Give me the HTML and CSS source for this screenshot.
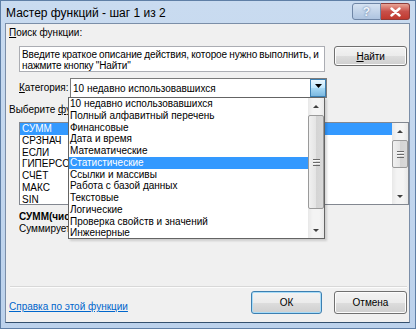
FILE: index.html
```html
<!DOCTYPE html>
<html lang="ru">
<head>
    <meta charset="UTF-8">
    <title>Мастер функций</title>
    <link rel="stylesheet" href="styles.css">
</head>
<body>
<div class="window">
    <div class="titlebar">
        <span class="title">Мастер функций - шаг 1 из 2</span>
        <div class="caption-btns">
            <span class="cbtn help">?</span>
            <span class="cbtn close">
                <svg width="11" height="10" viewBox="0 0 11 10"><path d="M1.5 1.5l8 7M9.5 1.5l-8 7" stroke="#fff" stroke-width="2.4" stroke-linecap="round"/></svg>
            </span>
        </div>
    </div>
    <div class="client">
        <div class="label top-label"><u>П</u>оиск функции:</div>
        <div class="search-row">
            <div class="textarea">Введите краткое описание действия, которое нужно выполнить, и<br>нажмите кнопку "Найти"</div>
            <div class="button find"><u>Н</u>айти</div>
        </div>
        <div class="cat-row">
            <span class="label"><u>К</u>атегория:</span>
            <div class="combo">
                <span class="combo-text">10 недавно использовавшихся</span>
                <span class="combo-arrow"><svg width="7" height="4" viewBox="0 0 7 4"><path d="M0 0h7L3.5 4z" fill="#000"/></svg></span>
            </div>
        </div>
        <div class="label list-label">Выберите <u>ф</u>ункцию:</div>
        <div class="listbox">
            <ul class="items">
                <li class="sel">СУММ</li>
                <li>СРЗНАЧ</li>
                <li>ЕСЛИ</li>
                <li>ГИПЕРССЫЛКА</li>
                <li>СЧЁТ</li>
                <li>МАКС</li>
                <li>SIN</li>
            </ul>
            <div class="vscroll">
                <span class="arr up"></span>
                <span class="thumb list-thumb"><i></i></span>
                <span class="track"></span>
                <span class="arr down"></span>
            </div>
        </div>
        <div class="signature">СУММ(число1;число2;...)</div>
        <div class="desc">Суммирует аргументы.</div>
        <div class="separator"></div>
        <div class="bottom-row">
            <a class="link" href="#">Справка по этой функции</a>
            <div class="button ok">ОК</div>
            <div class="button cancel">Отмена</div>
        </div>

        <div class="dropdown">
            <ul class="items drop-items">
                <li>10 недавно использовавшихся</li>
                <li>Полный алфавитный перечень</li>
                <li>Финансовые</li>
                <li>Дата и время</li>
                <li>Математические</li>
                <li class="sel">Статистические</li>
                <li>Ссылки и массивы</li>
                <li>Работа с базой данных</li>
                <li>Текстовые</li>
                <li>Логические</li>
                <li>Проверка свойств и значений</li>
                <li>Инженерные</li>
            </ul>
            <div class="vscroll">
                <span class="arr up"></span>
                <span class="thumb drop-thumb"><i></i></span>
                <span class="track"></span>
                <span class="arr down"></span>
            </div>
        </div>
    </div>
</div>
</body>
</html>
```
FILE: styles.css
```css
* {
    margin: 0;
    padding: 0;
    box-sizing: border-box;
}
body {
    width: 416px;
    height: 329px;
    overflow: hidden;
    font-family: "Liberation Sans", Arial, sans-serif;
    font-size: 10px;
    color: #000;
}
.window {
    width: 416px;
    height: 329px;
    background: linear-gradient(#c9dbf0, #bcd2ec);
    border: 1px solid #5f7fa6;
    padding: 0 5px 5px 4px;
    display: flex;
    flex-direction: column;
}
.titlebar {
    height: 22px;
    display: flex;
    align-items: center;
    justify-content: space-between;
}
.title {
    font-size: 12px;
    padding-left: 1px;
    padding-top: 1px;
}
.caption-btns {
    display: flex;
    align-self: flex-start;
    margin-top: 2px;
}
.cbtn {
    height: 17px;
    display: flex;
    align-items: center;
    justify-content: center;
    border: 1px solid #6f86a6;
}
.help {
    width: 29px;
    border-radius: 3px 0 0 3px;
    background: linear-gradient(#d6e3f2, #aec4e0);
    color: #eef4fb;
    font-weight: bold;
    font-size: 12px;
    text-shadow: 0 0 2px #4a6690;
}
.close {
    width: 29px;
    border-left: none;
    border-color: #8c3c3c;
    border-radius: 0 3px 3px 0;
    background: linear-gradient(#e9a596, #c8504a 50%, #c0392e);
}
.client {
    position: relative;
    flex: 1;
    background: #f0f0f0;
    border: 1px solid #7b8ea8;
    border-bottom-color: #34506e;
    display: flex;
    flex-direction: column;
    padding: 3px 2px 8px 2px;
}
.label {
    line-height: 12px;
    white-space: nowrap;
}
.top-label {
    padding-left: 1px;
}
.search-row {
    display: flex;
    align-items: flex-start;
    margin: 7px 0 0 11px;
}
.textarea {
    width: 308px;
    height: 26px;
    background: #fff;
    border: 1px solid #abadb3;
    padding: 2px 2px;
    line-height: 11px;
    white-space: nowrap;
    overflow: hidden;
    letter-spacing: -0.1px;
    word-spacing: -0.5px;
}
.button {
    height: 20px;
    display: flex;
    align-items: center;
    justify-content: center;
    border: 1px solid #707070;
    border-radius: 3px;
    background: linear-gradient(#f3f3f3, #ebebeb 50%, #dddddd 50%, #cfcfcf);
    box-shadow: inset 0 0 0 1px #fcfcfc;
}
.find {
    width: 73px;
    margin-left: 9px;
}
.cat-row {
    display: flex;
    align-items: center;
    margin: 6px 0 0 11px;
}
.cat-row .label {
    width: 51px;
}
.combo {
    width: 257px;
    height: 20px;
    background: #fff;
    border: 1px solid #7a7a7a;
    display: flex;
    align-items: center;
    justify-content: space-between;
    padding-left: 2px;
}
.combo-arrow {
    width: 16px;
    height: 18px;
    border: 1px solid #3c7fb1;
    background: linear-gradient(#eaf6fd, #bee6fd 50%, #a7d9f5 50%, #7bb8e0);
    display: flex;
    justify-content: center;
    padding-top: 4px;
}
.list-label {
    margin-top: 6px;
    padding-left: 1px;
}
.listbox {
    width: 390px;
    height: 83px;
    margin: 6px 0 0 11px;
    background: #fff;
    border: 1px solid #828790;
    display: flex;
}
.items {
    flex: 1;
    list-style: none;
    white-space: nowrap;
    overflow: hidden;
}
.items li {
    height: 11.75px;
    line-height: 11.75px;
    padding-left: 2px;
}
.items .sel {
    background: #3399ff;
    color: #fff;
}
.vscroll {
    width: 16px;
    display: flex;
    flex-direction: column;
    background: linear-gradient(90deg, #e8e8e8, #f4f4f4 30%, #f4f4f4 70%, #e8e8e8);
}
.arr {
    height: 16px;
    display: flex;
    align-items: center;
    justify-content: center;
}
.arr::before {
    content: "";
    border-left: 3px solid transparent;
    border-right: 3px solid transparent;
}
.up::before {
    border-bottom: 3px solid #404040;
}
.down::before {
    border-top: 3px solid #404040;
}
.thumb {
    margin: 1px 0;
    border: 1px solid #9a9a9a;
    border-radius: 2px;
    background: linear-gradient(90deg, #f0f0f0, #e4e4e4 50%, #d4d4d4 50%, #d9d9d9);
    display: flex;
    align-items: center;
    justify-content: center;
}
.thumb i {
    width: 7px;
    height: 7px;
    background: repeating-linear-gradient(#6a6a6a 0 1px, #f8f8f8 1px 2px, transparent 2px 3px);
}
.track {
    flex: 1;
}
.list-thumb {
    height: 28px;
}
.signature {
    margin: 6px 0 0 11px;
    font-weight: bold;
    line-height: 12px;
}
.desc {
    margin-left: 11px;
    line-height: 12px;
}
.separator {
    margin-top: auto;
    margin-left: 2px;
    height: 2px;
    border-top: 1px solid #d8d8d8;
    border-bottom: 1px solid #fcfcfc;
}
.bottom-row {
    display: flex;
    align-items: center;
    margin-top: 3px;
}
.link {
    flex: 1;
    color: #0066cc;
    padding-left: 1px;
    padding-top: 8px;
}
.ok, .cancel {
    width: 71px;
    height: 23px;
}
.ok {
    border-color: #3c7fb1;
    box-shadow: inset 0 0 0 1px #a8dcf8;
}
.cancel {
    width: 73px;
    margin-left: 12px;
}
.dropdown {
    position: absolute;
    left: 62px;
    top: 73px;
    width: 257px;
    height: 142px;
    background: #fff;
    border: 1px solid #646464;
    display: flex;
    box-shadow: 2px 2px 2px rgba(0, 0, 0, 0.15);
}
.drop-items li {
    padding-left: 1px;
}
.drop-thumb {
    height: 94px;
}
```
